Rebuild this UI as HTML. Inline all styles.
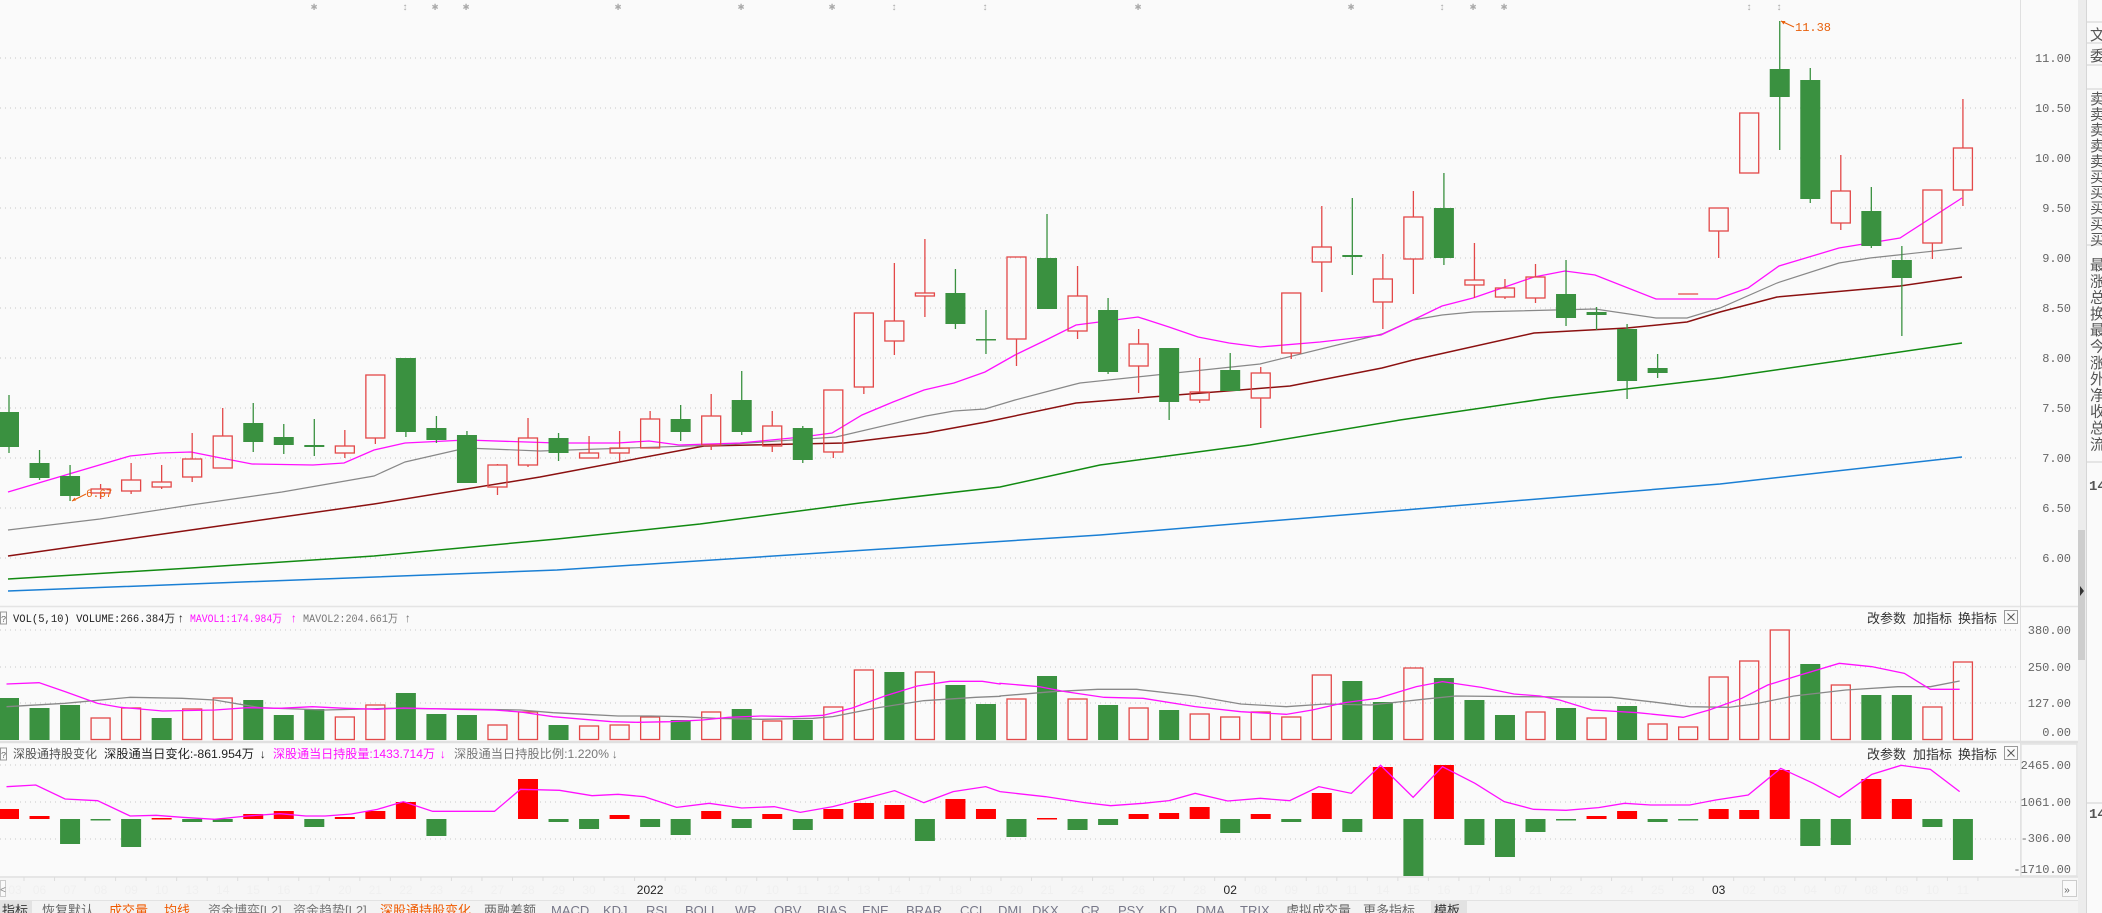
<!DOCTYPE html>
<html><head><meta charset="utf-8">
<style>
html,body{margin:0;padding:0;background:#fafafa;}
body{width:2102px;height:913px;overflow:hidden;position:relative;}
svg{position:absolute;left:0;top:0;}
text{font-family:"Liberation Mono","Noto Sans CJK SC",monospace;}
.cj{font-family:"Liberation Sans","Noto Sans CJK SC",sans-serif;}
</style></head>
<body>
<svg id="s" width="2102" height="913" viewBox="0 0 2102 913" xmlns="http://www.w3.org/2000/svg"></svg>
<script>
var S=[];function a(x){S.push(x);}
var R='#e34848',G='#3a9140';
function cx(i){return 9+30.53*i;}
a('<rect x="0" y="0" width="2102" height="913" fill="#fafafa"/>');
a('<rect x="0" y="877" width="2078" height="23" fill="#f6f6f6"/>');
a('<rect x="0" y="900" width="2078" height="13" fill="#f3f3f3"/>');
a('<line x1="0" y1="900.5" x2="2078" y2="900.5" stroke="#e2e2e2"/>');
a('<line x1="0" y1="606.5" x2="2078" y2="606.5" stroke="#e4e4e4" stroke-width="1.5"/>');
a('<line x1="0" y1="742" x2="2078" y2="742" stroke="#e0e0e0" stroke-width="2.5"/>');
a('<line x1="0" y1="877" x2="2078" y2="877" stroke="#e0e0e0" stroke-width="1.5"/>');
a('<line x1="2020.5" y1="0" x2="2020.5" y2="877" stroke="#e0e0e0"/>');
a('<rect x="2021" y="744" width="56" height="132" fill="none" stroke="#e2e2e2" stroke-width="1.5"/>');
a('<rect x="2078" y="0" width="8" height="913" fill="#ececec"/>');
a('<rect x="2078" y="530" width="7" height="130" fill="#cdcdcd"/>');
a('<path d="M2080 586 L2084 591 L2080 596 Z" fill="#333"/>');
a('<line x1="2086.5" y1="0" x2="2086.5" y2="913" stroke="#d6d6d6"/>');
[22,43,65,89,245,462,803].forEach(function(y){a('<line x1="2087" y1="'+y+'" x2="2102" y2="'+y+'" stroke="#d0d0d0"/>');});
var rc=[['文',40],['委',61]];
var mm='卖卖卖卖卖买买买买买'.split('');mm.forEach(function(c,k){rc.push([c,104+k*15.6]);});
'最涨总换最今涨外净收总流'.split('').forEach(function(c,k){rc.push([c,270+k*16.3]);});
rc.forEach(function(r){a('<text class="cj" x="2090" y="'+r[1]+'" font-size="15" fill="#555">'+r[0]+'</text>');});
a('<text x="2089" y="490" font-size="14" font-weight="bold" fill="#555">14</text>');
a('<text x="2089" y="818" font-size="14" font-weight="bold" fill="#555">14</text>');
function grid(y){a('<line x1="0" y1="'+y+'" x2="2018" y2="'+y+'" stroke="#c8c8c8" stroke-dasharray="1,4"/>');}
for(var k=0;k<=10;k++)grid(58+50*k);
[630,667,703].forEach(grid);[765,802,839].forEach(grid);
var pl=['11.00','10.50','10.00','9.50','9.00','8.50','8.00','7.50','7.00','6.50','6.00'];
pl.forEach(function(t,k){a('<text x="2071" y="'+(62+50*k)+'" font-size="12" fill="#666" text-anchor="end">'+t+'</text>');});
[['380.00',634],['250.00',671],['127.00',707],['0.00',736]].forEach(function(t){a('<text x="2071" y="'+t[1]+'" font-size="12" fill="#666" text-anchor="end">'+t[0]+'</text>');});
[['2465.00',769],['1061.00',806],['-306.00',842],['-1710.00',873]].forEach(function(t){a('<text x="2071" y="'+t[1]+'" font-size="12" fill="#666" text-anchor="end">'+t[0]+'</text>');});
function pl_(pts,c,w){a('<polyline fill="none" stroke="'+c+'" stroke-width="'+(w||1.2)+'" points="'+pts.map(function(p){return p[0]+','+p[1];}).join(' ')+'"/>');}
pl_([[8,591],[557,570],[1100,535],[1720,484],[1962,457]],'#1a7fd4',1.5);
pl_([[8,579],[191,568],[374,556],[557,539],[700,524],[860,503],[1000,487],[1100,465],[1250,445],[1400,420],[1550,398],[1720,378],[1962,343]],'#118a11',1.5);
pl_([[8,556],[191,530],[374,504],[540,477],[704,446],[844,443],[926,433],[986,422],[1076,403],[1202,393],[1290,386],[1382,368],[1413,360],[1534,333],[1627,328],[1687,322],[1720,312],[1777,297],[1900,286],[1962,277]],'#8b1010',1.5);
pl_([[8,530],[100,519],[191,505],[282,492],[374,476],[405,462],[466,448],[540,451],[719,445],[836,437],[926,416],[954,411],[985,409],[1015,400],[1072,385],[1080,383],[1260,364],[1382,334],[1413,320],[1442,315],[1473,312],[1595,309],[1656,318],[1687,318],[1720,308],[1777,283],[1839,263],[1870,258],[1962,248]],'#888',1.2);
pl_([[8,492],[130,456],[160,453],[191,452],[221,458],[252,464],[313,465],[344,463],[374,450],[405,443],[466,440],[557,443],[618,443],[649,441],[679,445],[740,443],[802,437],[832,433],[862,415],[893,402],[924,390],[954,383],[985,372],[1015,355],[1046,340],[1076,325],[1107,321],[1138,317],[1169,327],[1198,337],[1229,343],[1260,347],[1320,342],[1381,335],[1413,320],[1442,306],[1473,298],[1534,277],[1565,271],[1595,275],[1656,299],[1717,299],[1748,288],[1779,266],[1839,248],[1900,238],[1962,198]],'#ff10ff',1.3);
var C=[['G',412,447,395,453],['G',463,478,450,480],['G',476,496,465,501],['R',489,493,484,499],['R',480,491,463,494],['R',482,487,465,489],['R',459,477,433,482],['R',436,468,408,468],['G',423,442,403,452],['G',437,445,424,454],['G',445,447,419,456],['R',446,453,430,458],['R',375,438,375,444],['G',358,432,358,437],['G',428,440,416,443],['G',435,483,431,483],['R',465,487,464,495],['R',438,465,418,467],['G',438,453,433,461],['R',453,458,436,458],['R',448,453,431,461],['R',419,448,411,448],['G',419,432,405,441],['R',416,445,394,450],['G',400,432,371,435],['R',426,446,411,452],['G',428,460,426,463],['R',390,452,390,458],['R',313,387,313,394],['R',321,341,263,355],['R',293,296,239,317],['G',293,324,269,329],['G',339,340,310,354],['R',257,339,257,366],['G',258,309,214,309],['R',296,331,266,339],['G',310,372,298,374],['R',344,366,329,393],['G',348,402,348,420],['R',392,400,358,403],['G',370,391,353,391],['R',373,398,367,428],['R',293,353,293,359],['R',247,262,206,292],['G',255,257,198,275],['R',279,302,254,329],['R',217,259,191,294],['G',208,258,173,265],['R',280,285,243,298],['R',288,297,279,299],['R',277,298,264,303],['G',294,318,260,326],['G',312,315,307,330],['G',329,381,324,399],['G',368,373,354,378],['R',294,295,294,295],['R',208,231,208,258],['R',113,173,113,173],['G',69,97,21,150],['G',80,199,68,203],['R',191,223,155,230],['G',211,246,187,248],['G',260,278,246,336],['R',190,243,190,259],['R',148,190,99,206]];
C.forEach(function(c,i){var x=cx(i),col=c[0]=='G'?G:R;
 if(c[3]<c[1])a('<line x1="'+x+'" y1="'+c[3]+'" x2="'+x+'" y2="'+c[1]+'" stroke="'+col+'" stroke-width="1.3"/>');
 if(c[4]>c[2])a('<line x1="'+x+'" y1="'+c[2]+'" x2="'+x+'" y2="'+c[4]+'" stroke="'+col+'" stroke-width="1.3"/>');
 var h=c[2]-c[1];
 if(c[0]=='G'){a('<rect x="'+(x-10)+'" y="'+c[1]+'" width="20" height="'+Math.max(h,1.5)+'" fill="'+G+'"/>');}
 else{if(h<2)a('<line x1="'+(x-10)+'" y1="'+c[1]+'" x2="'+(x+10)+'" y2="'+c[1]+'" stroke="'+R+'" stroke-width="1.3"/>');
 else a('<rect x="'+(x-9.5)+'" y="'+c[1]+'" width="19" height="'+h+'" fill="none" stroke="'+R+'" stroke-width="1.3"/>');}
});
a('<text x="86" y="497" font-size="11" fill="#e8600c">6.67</text><path d="M72 501 L86 494" stroke="#e8600c" fill="none"/><path d="M72 501 l4 -0.5 l-1.5 -3z" fill="#e8600c"/>');
a('<text x="1795" y="31" font-size="12" fill="#e8600c">11.38</text><path d="M1781 21 L1794 27" stroke="#e8600c" fill="none"/><path d="M1781 21 l4.5 0 l-2 3.5z" fill="#e8600c"/>');
[314,435,466,618,741,832,1138,1351,1473,1504].forEach(function(x){a('<text x="'+x+'" y="10" font-size="11" fill="#aaa" text-anchor="middle">✱</text>');});
[405,894,985,1442,1749,1779].forEach(function(x){a('<text x="'+x+'" y="10" font-size="10" fill="#aaa" text-anchor="middle" font-weight="bold">↕</text>');});
var vt=[698,708,705,718,708,718,709,698,700,715,709,717,705,693,714,715,725,712,725,726,725,717,720,712,709,721,720,707,670,672,672,685,704,699,676,699,705,708,710,714,717,712,717,675,681,702,668,678,700,715,712,708,718,706,724,727,677,661,630,664,685,695,695,707,662];
var vc="GGGRRGRRGGGRRGGGRRGRRRGRGRGRRGRGGRGRGRGRRRRRGGRGGGRGRGRRRRRGRGGRR";
vt.forEach(function(t,i){var x=cx(i);if(vc[i]=='G')a('<rect x="'+(x-10)+'" y="'+t+'" width="20" height="'+(740-t)+'" fill="'+G+'"/>');
 else a('<rect x="'+(x-9.5)+'" y="'+t+'" width="19" height="'+(739.5-t)+'" fill="none" stroke="'+R+'" stroke-width="1.3"/>');});
function zc(arr,off,f){return arr.map(function(p){return [off+p[0]/1.537,610+p[1]/3];});}
var vm=zc([[10,222],[60,218],[100,245],[150,280],[185,292],[250,303],[330,300],[380,293],[430,295],[480,290],[530,295],[580,298],[620,294],[700,298],[760,300],[800,306],[850,320],[940,335],[980,337],[1030,335],[1080,330],[1120,322],[1170,318],[1220,320],[1265,316],[1310,294],[1360,258],[1410,228],[1460,214],[1510,214],[1537,222]],0).concat(zc([[0,220],[60,230],[100,245],[160,262],[220,265],[300,290],[370,305],[440,313],[480,300],[530,278],[580,265],[640,230],[680,215],[740,232],[790,252],[830,258],[860,270],[910,300],[980,308],[1050,322],[1090,300],[1140,265],[1180,225],[1230,195],[1290,160],[1340,170],[1390,190],[1430,238],[1475,238]],1000));
var vg=zc([[10,290],[100,280],[200,262],[280,265],[330,270],[400,293],[500,300],[600,295],[700,297],[800,300],[850,308],[900,313],[950,318],[1000,318],[1050,320],[1100,325],[1170,328],[1250,325],[1280,320],[1350,293],[1420,272],[1500,262],[1537,259]],0).concat(zc([[0,258],[80,245],[150,238],[210,238],[300,258],[370,282],[440,290],[500,282],[570,285],[650,268],[700,258],[800,260],[940,262],[1000,275],[1060,290],[1120,292],[1160,282],[1220,258],[1300,240],[1380,230],[1430,230],[1475,213]],1000));
pl_(vg,'#888',1.3);pl_(vm,'#ff10ff',1.3);
var sb=[809,816,844,820,847,818,822,822,814,811,827,817,811,802,836,819,819,779,822,829,815,827,835,811,828,814,830,809,803,805,841,799,809,837,818,830,825,814,813,807,833,814,822,793,832,767,876,765,845,857,832,820,816,811,822,820,809,810,770,846,845,779,799,827,860];
sb.forEach(function(y,i){if(y==819)return;var x=cx(i);var up=y<819;var t=Math.min(y,819),h=Math.max(Math.abs(y-819),1.5);a('<rect x="'+(x-10)+'" y="'+t+'" width="20" height="'+h+'" fill="'+(up?'#ff0000':G)+'"/>');});
var sm=zc([[10,530],[55,525],[100,567],[150,572],[200,618],[240,616],[280,622],[330,628],[380,618],[430,611],[470,618],[500,618],[540,612],[580,598],[620,575],[665,604],[760,604],[800,538],[860,541],[910,557],[950,553],[990,560],[1040,592],[1090,580],[1140,594],[1190,590],[1230,607],[1280,590],[1330,565],[1375,542],[1420,578],[1465,545],[1515,530],[1537,545]],0).concat(zc([[0,545],[70,560],[130,578],[170,587],[220,580],[260,572],[300,550],[350,573],[400,565],[445,572],[490,530],[540,550],[585,466],[635,562],[680,470],[730,520],[775,575],[820,598],[870,601],[920,593],[960,580],[1000,585],[1060,585],[1100,570],[1150,555],[1200,475],[1250,520],[1290,562],[1340,493],[1385,466],[1430,478],[1475,545]],1000));
pl_(sm,'#ff10ff',1.3);
function qb(y){a('<rect x="0.5" y="'+(y-9)+'" width="6" height="12" fill="none" stroke="#999"/><text x="1" y="'+(y+1)+'" font-size="9" fill="#666">?</text>');}
qb(621);qb(757);
a('<text x="13" y="622" font-size="11" fill="#222" textLength="162" lengthAdjust="spacingAndGlyphs">VOL(5,10) VOLUME:266.384万</text><text x="177" y="622" font-size="12" fill="#222">↑</text>');
a('<text x="190" y="622" font-size="11" fill="#ff10ff" textLength="92" lengthAdjust="spacingAndGlyphs">MAVOL1:174.984万</text><text x="290" y="622" font-size="12" fill="#ff10ff">↑</text>');
a('<text x="303" y="622" font-size="11" fill="#777" textLength="95" lengthAdjust="spacingAndGlyphs">MAVOL2:204.661万</text><text x="404" y="622" font-size="12" fill="#777">↑</text>');
a('<text class="cj" x="13" y="758" font-size="12" fill="#555" textLength="84" lengthAdjust="spacingAndGlyphs">深股通持股变化</text>');
a('<text class="cj" x="104" y="758" font-size="12" fill="#222" textLength="150" lengthAdjust="spacingAndGlyphs">深股通当日变化:-861.954万</text><text x="259" y="758" font-size="12" fill="#222">↓</text>');
a('<text class="cj" x="273" y="758" font-size="12" fill="#ff10ff" textLength="162" lengthAdjust="spacingAndGlyphs">深股通当日持股量:1433.714万</text><text x="439" y="758" font-size="12" fill="#ff10ff">↓</text>');
a('<text class="cj" x="454" y="758" font-size="12" fill="#777" textLength="155" lengthAdjust="spacingAndGlyphs">深股通当日持股比例:1.220%</text><text x="611" y="758" font-size="12" fill="#777">↓</text>');
[622,758].forEach(function(y){
 a('<text class="cj" x="1867" y="'+(y+1)+'" font-size="13" fill="#333">改参数</text><text class="cj" x="1913" y="'+(y+1)+'" font-size="13" fill="#333">加指标</text><text class="cj" x="1958" y="'+(y+1)+'" font-size="13" fill="#333">换指标</text>');
 a('<rect x="2004.5" y="'+(y-11.5)+'" width="13" height="13" fill="none" stroke="#999"/><path d="M2007.5 '+(y-8.5)+' l7 7 M2014.5 '+(y-8.5)+' l-7 7" stroke="#555"/>');
});
var ds=['03','06','07','08','09','10','13','14','15','16','17','20','21','22','23','24','27','28','29','30','31','2022','05','06','07','10','11','12','13','14','17','18','19','20','21','24','25','26','27','28','02','08','09','10','11','14','15','16','17','18','21','22','23','24','25','28','03','02','03','04','07','08','09','10','11'];
ds.forEach(function(d,i){var x=cx(i)+(i==0?6:0);var dk=(d=='2022'||i==40||i==56);a('<text class="cj" x="'+x+'" y="894" font-size="12" text-anchor="middle" fill="'+(dk?'#222':'#f0f0f0')+'">'+d+'</text>');a('<line x1="'+(cx(i)+15)+'" y1="877" x2="'+(cx(i)+15)+'" y2="881" stroke="#ddd"/>');});
a('<rect x="0.5" y="880.5" width="5" height="16" fill="#fafafa" stroke="#ccc"/><text x="0" y="893" font-size="10" fill="#888">&lt;</text>');
a('<rect x="2062.5" y="880.5" width="14" height="16" fill="#fafafa" stroke="#ccc"/><text x="2064" y="893" font-size="10" fill="#666">»</text>');
a('<rect x="0" y="901" width="32" height="12" fill="#e2e2e2"/><rect x="1431" y="901" width="36" height="12" fill="#e2e2e2"/>');
var tabs=[['指标',2,'#333'],['恢复默认',42,'#666'],['成交量',109,'#f05a00'],['均线',164,'#f05a00'],['资金博弈[L2]',208,'#777'],['资金趋势[L2]',293,'#777'],['深股通持股变化',380,'#f05a00'],['两融差额',484,'#666'],['MACD',551,'#778'],['KDJ',603,'#778'],['RSI',646,'#778'],['BOLL',685,'#778'],['WR',735,'#778'],['OBV',774,'#778'],['BIAS',817,'#778'],['ENE',862,'#778'],['BRAR',906,'#778'],['CCI',960,'#778'],['DMI',998,'#778'],['DKX',1032,'#778'],['CR',1081,'#778'],['PSY',1118,'#778'],['KD',1159,'#778'],['DMA',1196,'#778'],['TRIX',1240,'#778'],['虚拟成交量',1286,'#666'],['更多指标',1363,'#666'],['模板',1434,'#333']];
tabs.forEach(function(t){a('<text class="cj" x="'+t[1]+'" y="915" font-size="13" fill="'+t[2]+'">'+t[0]+'</text>');});
document.getElementById('s').innerHTML=S.join('');
</script>
</body></html>
